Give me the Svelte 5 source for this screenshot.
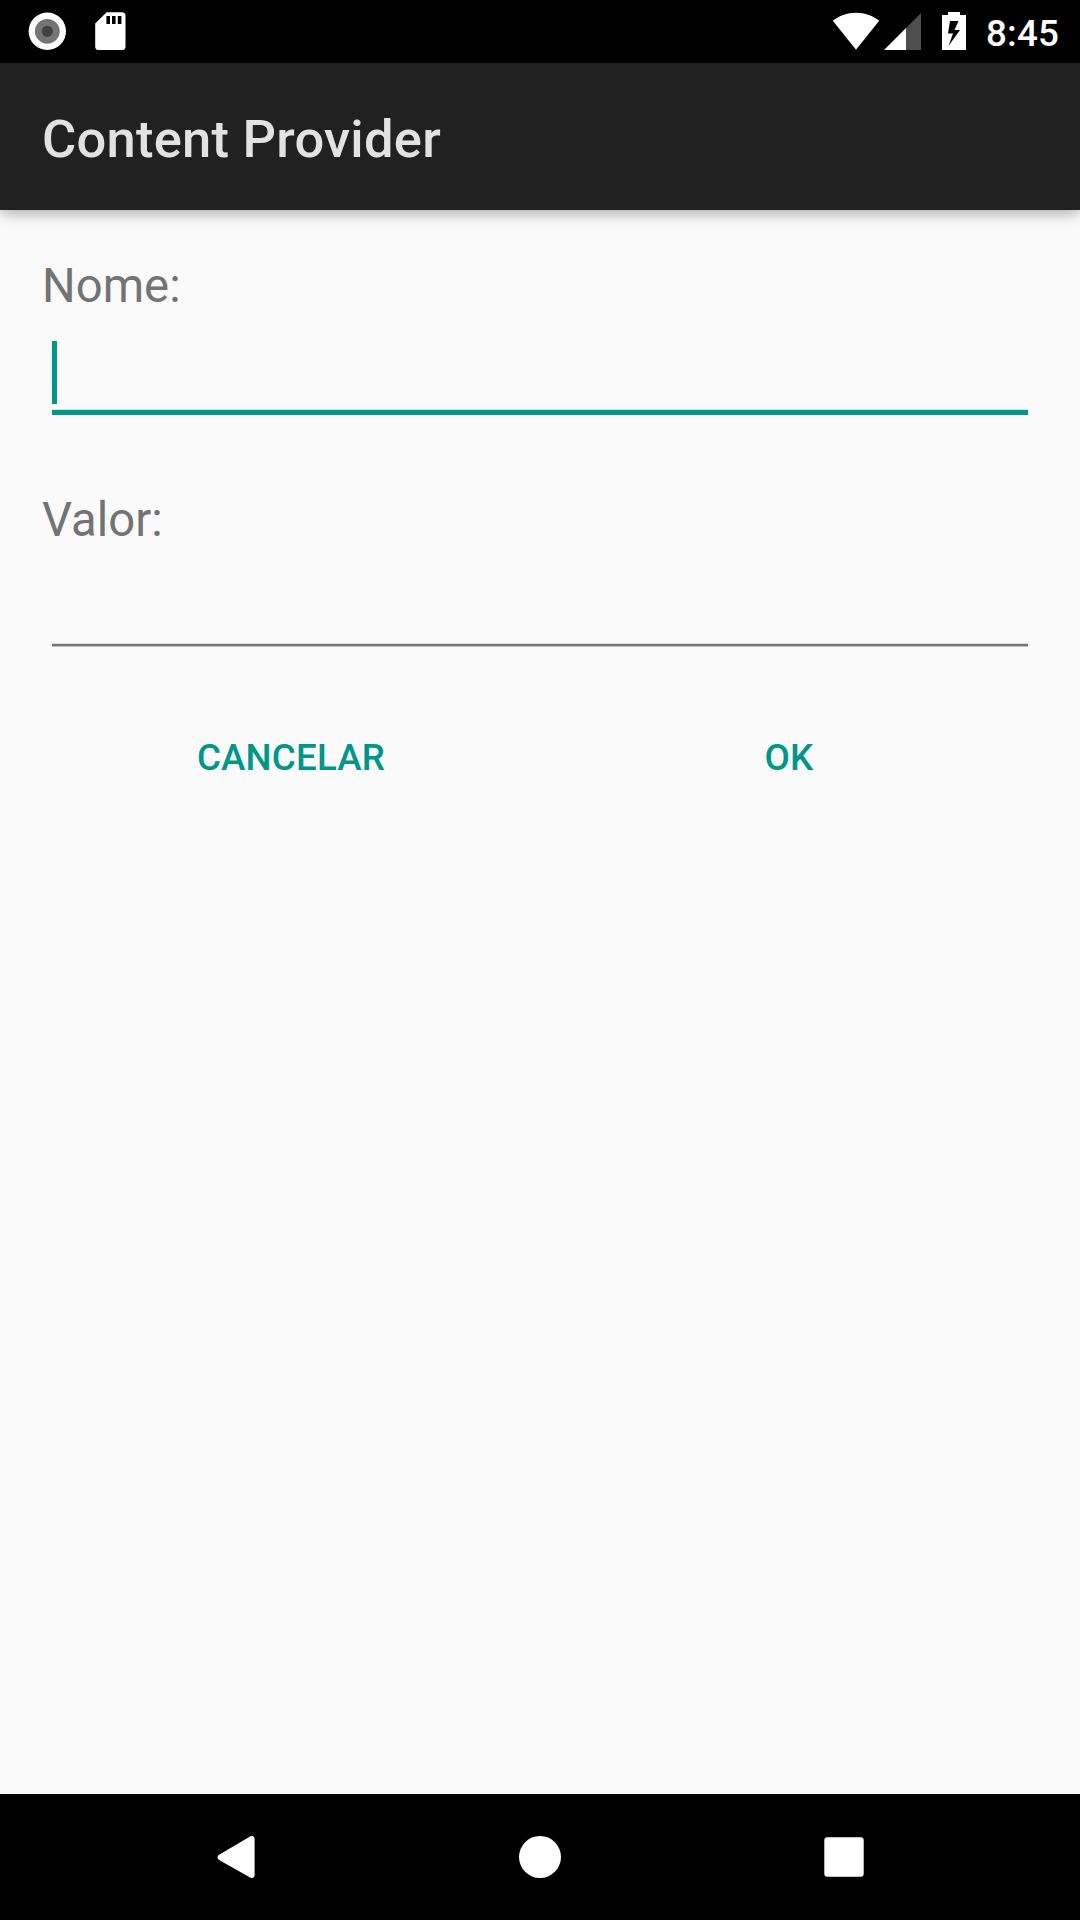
<script>
  let nome = $state('');
  let valor = $state('');
</script>

<div class="screen">
  <header class="status">
    <div class="group">
      <svg class="record" width="38" height="38" viewBox="0 0 38 38" aria-hidden="true">
        <circle cx="19.3" cy="19.3" r="18.7" fill="#fff" />
        <circle cx="19.3" cy="19.3" r="12.4" fill="#757575" />
        <circle cx="19.3" cy="19.3" r="5.6" fill="#424242" />
      </svg>
      <svg class="card" width="31" height="38" viewBox="0 0 31 38" aria-hidden="true">
        <path fill="#fff" fill-rule="evenodd" d="M11.6 .3H27Q30.5 .3 30.5 3.8V34.4Q30.5 38 27 38H3.6Q.2 38 .2 34.4V11.6ZM11.4 3.9V12H15V3.9ZM17 3.9V12H20.6V3.9ZM22.8 3.9V12H26.4V3.9Z" />
      </svg>
    </div>
    <div class="group">
      <svg class="wifi" width="48" height="38" viewBox="0 0 48 38" aria-hidden="true">
        <path fill="#fff" d="M.8 8.7C7 3.7 15 .7 24 .7S41 3.7 47.2 8.7L24 37.8Z" />
      </svg>
      <svg class="signal" width="38" height="38" viewBox="0 0 38 38" aria-hidden="true">
        <path fill="#4d4d4d" d="M37 0V37H22V15Z" />
        <path fill="#fff" d="M22 15V37H0Z" />
      </svg>
      <svg class="battery" width="24" height="38" viewBox="0 0 24 38" aria-hidden="true">
        <path fill="#fff" fill-rule="evenodd" d="M6 0H18V3H24V38H0V3H6ZM8 9L6 21.5H11L6.5 34L18 18H12.5L16.5 9Z" />
      </svg>
      <span class="time">8:45</span>
    </div>
  </header>

  <div class="toolbar"><h1>Content Provider</h1></div>

  <main>
    <label for="nome">Nome:</label>
    <div class="field focused">
      <input id="nome" type="text" bind:value={nome} />
      <span class="caret"></span>
    </div>
    <label for="valor">Valor:</label>
    <div class="field">
      <input id="valor" type="text" bind:value={valor} />
    </div>
    <div class="actions">
      <button type="button">CANCELAR</button>
      <button type="button">OK</button>
    </div>
  </main>

  <nav>
    <svg width="126" height="126" viewBox="0 0 126 126" aria-hidden="true">
      <path fill="#fff" stroke="#fff" stroke-width="6" stroke-linejoin="round" d="M47.6 63.3L78.6 45V81Z" />
    </svg>
    <svg width="126" height="126" viewBox="0 0 126 126" aria-hidden="true">
      <circle cx="63" cy="63" r="21" fill="#fff" />
    </svg>
    <svg width="126" height="126" viewBox="0 0 126 126" aria-hidden="true">
      <rect x="43.3" y="43.3" width="39.4" height="39.4" rx="3" fill="#fff" />
    </svg>
  </nav>
</div>

<style>
  :global(body) {
    margin: 0;
    background: #fafafa;
  }
  .screen {
    display: flex;
    flex-direction: column;
    width: 1080px;
    height: 1920px;
    background: #fafafa;
    font-family: Roboto, sans-serif;
    overflow: hidden;
  }
  svg {
    display: block;
    flex: none;
  }
  .status {
    display: flex;
    justify-content: space-between;
    height: 63px;
    padding: 0 21px 0 28px;
    box-sizing: border-box;
    background: #000;
  }
  .group {
    display: flex;
    align-items: flex-start;
    padding-top: 12px;
  }
  .card {
    margin-left: 29px;
  }
  .signal {
    margin: 1px 0 0 4px;
  }
  .battery {
    margin-left: 20px;
  }
  .time {
    margin: 0 0 0 20px;
    font-size: 36.75px;
    font-weight: 500;
    line-height: 43px;
    letter-spacing: 0.15px;
    color: #fff;
  }
  .toolbar {
    display: flex;
    align-items: center;
    flex: none;
    height: 147px;
    padding: 5px 42px 0;
    box-sizing: border-box;
    background: #212121;
    box-shadow: 0 5px 12px -1px rgba(0, 0, 0, 0.3);
  }
  h1 {
    margin: 0;
    font-size: 52.5px;
    font-weight: 500;
    line-height: 62px;
    letter-spacing: 0.24px;
    color: #e2e2e2;
  }
  main {
    display: flex;
    flex-direction: column;
    flex: 1;
    padding: 48px 42px 0;
  }
  label {
    font-size: 47.25px;
    line-height: 56px;
    color: #737373;
  }
  .field {
    position: relative;
    height: 98px;
    margin: 0 10px;
    box-sizing: border-box;
    border-bottom: 2px solid #757575;
    box-shadow: 0 1px 0 #c0c0c0, inset 0 -1px 0 #dedede;
  }
  .focused {
    height: 101px;
    margin-bottom: 77px;
    border-bottom: 5px solid #009688;
    box-shadow: inset 0 -1px 0 #c4e5e1;
  }
  input {
    display: block;
    width: 100%;
    height: 92px;
    padding: 0;
    border: 0;
    outline: 0;
    background: transparent;
    font: inherit;
    font-size: 47.25px;
  }
  .caret {
    position: absolute;
    left: 0;
    top: 27px;
    width: 5px;
    height: 63px;
    background: #009688;
  }
  .actions {
    display: flex;
    margin-top: 48px;
  }
  button {
    flex: 1;
    height: 126px;
    padding: 0;
    border: 0;
    background: transparent;
    font: 500 36.75px/43px Roboto, sans-serif;
    letter-spacing: 0.15px;
    color: #009688;
  }
  nav {
    display: flex;
    flex: none;
    justify-content: center;
    gap: 178px;
    height: 126px;
    background: #000;
  }
</style>
